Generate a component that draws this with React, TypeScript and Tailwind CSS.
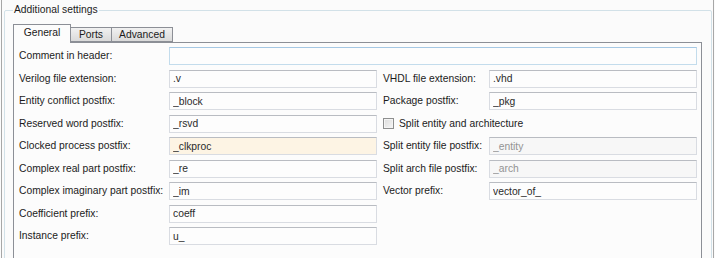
import React from 'react';

type Field = { value: string; tone?: 'normal' | 'warm' | 'disabled' };

const Input = ({ value, tone = 'normal' }: Field) => {
  const cls =
    tone === 'warm'
      ? 'bg-[#fdf4e4] text-[#2a2a2a]'
      : tone === 'disabled'
        ? 'bg-[#f7f7f7] text-[#939393]'
        : 'bg-[#fdfdfd] text-[#2a2a2a]';
  return (
    <input
      readOnly
      value={value}
      className={`h-[18px] w-full border border-[#d9dce2] border-t-[#b9bcc2] px-[3px] outline-none ${cls}`}
    />
  );
};

const Label = ({ text, right }: { text: string; right?: boolean }) => (
  <div className={`flex h-[18px] items-center whitespace-nowrap ${right ? 'pl-[6px]' : ''}`}>{text}</div>
);

const Tab = ({ text, active, first }: { text: string; active?: boolean; first?: boolean }) => (
  <div
    className={`flex items-center justify-center border border-[#8c8f96] ${first ? '' : '-ml-px'} ${
      active
        ? 'relative z-10 -mb-px h-[19px] border-b-0 bg-[#fcfcfc] pb-[2px]'
        : 'h-[15px] bg-gradient-to-b from-[#f1f1f1] to-[#dadada]'
    }`}
  >
    {text}
  </div>
);

const App = () => {
  return (
    <div className="h-[258px] w-[715px] overflow-hidden bg-[#fbfbfb] font-['Liberation_Sans',Arial,sans-serif] text-[10.3px] text-[#1b1b1b]">
      <div className="ml-[1px] h-full w-[713px] border-x border-[#a7a7a7] pl-[2px] pr-[1px] pt-[3px]">
        <fieldset className="h-[300px] rounded-[2px] border border-[#d2e1e8] pl-[8px] pr-[9px]">
          <legend className="px-[1px] leading-[14px]">Additional settings</legend>

          <div className="mt-[7px] flex items-end">
            <div className="w-[58px]">
              <Tab text="General" active first />
            </div>
            <div className="w-[41px]">
              <Tab text="Ports" />
            </div>
            <div className="w-[61px]">
              <Tab text="Advanced" />
            </div>
          </div>

          <div className="h-[240px] border border-[#8c8f96] bg-[#fcfcfc] pl-[5px] pr-[3px] pt-[4px]">
            <div className="grid grid-cols-[150px_208px_112px_208px] gap-y-[4.5px]">
              <Label text="Comment in header:" />
              <div className="col-span-3">
                <input
                  readOnly
                  value=""
                  className="h-[18px] w-full border border-[#c3dcec] border-t-[#a5c8e4] bg-[#fdfdfd] outline-none"
                />
              </div>

              <Label text="Verilog file extension:" />
              <Input value=".v" />
              <Label text="VHDL file extension:" right />
              <Input value=".vhd" />

              <Label text="Entity conflict postfix:" />
              <Input value="_block" />
              <Label text="Package postfix:" right />
              <Input value="_pkg" />

              <Label text="Reserved word postfix:" />
              <Input value="_rsvd" />
              <div className="col-span-2 flex h-[18px] items-center gap-[5px] pl-[6px]">
                <span className="h-[11px] w-[11px] border border-[#8e8f8f] bg-gradient-to-br from-[#dcdcdc] to-[#f6f6f6] shadow-[inset_0_0_0_1px_#f4f4f4]" />
                Split entity and architecture
              </div>

              <Label text="Clocked process postfix:" />
              <Input value="_clkproc" tone="warm" />
              <Label text="Split entity file postfix:" right />
              <Input value="_entity" tone="disabled" />

              <Label text="Complex real part postfix:" />
              <Input value="_re" />
              <Label text="Split arch file postfix:" right />
              <Input value="_arch" tone="disabled" />

              <Label text="Complex imaginary part postfix:" />
              <Input value="_im" />
              <Label text="Vector prefix:" right />
              <Input value="vector_of_" />

              <Label text="Coefficient prefix:" />
              <Input value="coeff" />
              <div className="col-span-2" />

              <Label text="Instance prefix:" />
              <Input value="u_" />
              <div className="col-span-2" />
            </div>
          </div>
        </fieldset>
      </div>
    </div>
  );
};

export default App;
